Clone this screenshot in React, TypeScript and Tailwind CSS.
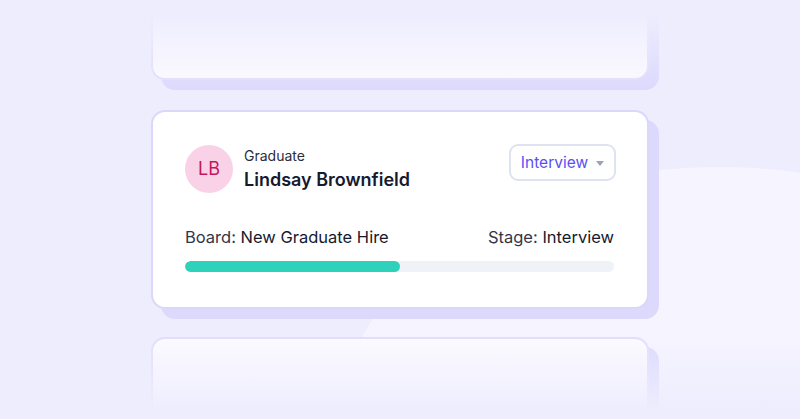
import React from "react"

const GhostCard = ({ className }: { className?: string }) => (
    <div className={`w-[498px] h-[120px] shrink-0 bg-[#FCFBFF] border-2 border-[#E0DEFC] rounded-[14px] shadow-[10px_10px_0_0_#DCD9FC] ${className ?? ""}`} />
)

export default function App() {
    const progress = 50

    return (
        <div className="relative w-full h-[419px] overflow-hidden bg-[#EEEDFE] font-['Inter','Liberation_Sans',sans-serif]">
            {/* soft background blob */}
            <div className="absolute left-[340px] top-[167px] w-[760px] h-[512px] rounded-[50%] bg-[#F5F4FF]" />

            <div className="relative flex flex-col items-center">
                <GhostCard className="-mt-[40px]" />

                <div className="w-[498px] mt-[30px] shrink-0 bg-white border-2 border-[#DAD7FB] rounded-[14px] shadow-[10px_10px_0_0_#DCD9FC] pt-[33px] pl-[32px] pr-[33px] pb-[35px] flex flex-col">
                    <div className="flex flex-row items-start justify-between">
                        <div className="flex flex-row items-center gap-[11px]">
                            <div className="w-[48px] h-[48px] rounded-full bg-[#F9D2E8] flex items-center justify-center">
                                <span className="text-[#C2185B] text-[18px] leading-none">LB</span>
                            </div>
                            <div className="flex flex-col">
                                <span className="text-[#2B2D3C] text-[14px] leading-[20px]">Graduate</span>
                                <span className="text-[#161A2E] text-[18px] leading-[24px] font-semibold mt-[2px]">Lindsay Brownfield</span>
                            </div>
                        </div>
                        <button className="-mt-[1px] -mr-[2px] w-[107px] h-[37px] flex flex-row items-center justify-center gap-[8px] bg-white border-2 border-[#DFE2EF] rounded-[9px]">
                            <span className="text-[#5A4FF3] text-[15.5px] leading-none">Interview</span>
                            <svg width="8" height="5" viewBox="0 0 8 5" className="mt-[1px]">
                                <path d="M0 0 H8 L4 5 Z" fill="#9CA3B8" />
                            </svg>
                        </button>
                    </div>

                    <div className="mt-[32px] flex flex-row items-center justify-between text-[16.5px] leading-[24px]">
                        <p className="text-[#33364A]">Board: <span className="text-[#161A2E]">New Graduate Hire</span></p>
                        <p className="text-[#33364A]">Stage: <span className="text-[#161A2E]">Interview</span></p>
                    </div>

                    <div className="mt-[12px] w-full h-[11px] rounded-full bg-[#EFF2F7] overflow-hidden">
                        <div className="h-full rounded-full bg-[#2ED1BA]" style={{ width: `${progress}%` }} />
                    </div>
                </div>

                <GhostCard className="mt-[28px]" />
            </div>

            {/* fades over the partial cards */}
            <div className="absolute left-0 top-0 w-full h-[90px] bg-gradient-to-b from-[#EEEDFE] from-15% to-transparent" />
            <div className="absolute left-0 bottom-0 w-full h-[85px] bg-gradient-to-t from-[#EEEDFE] from-10% to-transparent" />
        </div>
    )
}
